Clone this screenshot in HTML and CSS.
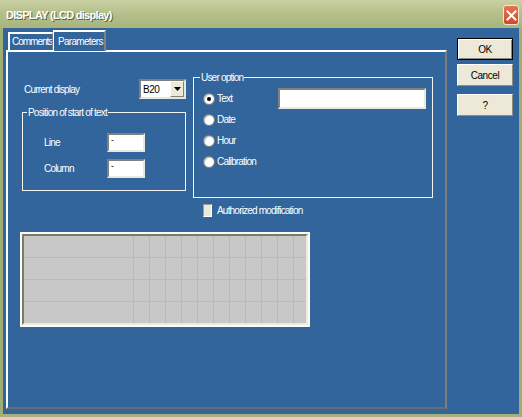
FILE: index.html
```html
<!DOCTYPE html>
<html>
<head>
<meta charset="utf-8">
<link rel="stylesheet" href="styles.css">
</head>
<body>
<div class="window">
  <div class="titlebar">
    <span class="title">DISPLAY (LCD display)</span>
    <span class="close"><svg width="11" height="11" viewBox="0 0 11 11"><path d="M1.5 1.5 L9.5 9.5 M9.5 1.5 L1.5 9.5" stroke="#fff" stroke-width="2" stroke-linecap="square"/></svg></span>
  </div>
  <div class="client">
    <div class="tabs-area">
      <div class="tabstrip">
        <div class="tab">Comments</div>
        <div class="tab active">Parameters</div>
      </div>
      <div class="panel">
        <div class="top-row">
          <div class="left-col">
            <div class="display-row">
              <span class="label">Current display</span>
              <div class="select"><span class="select-value">B20</span><span class="select-btn"><svg width="7" height="4" viewBox="0 0 7 4"><path d="M0 0 H7 L3.5 4 Z" fill="#000"/></svg></span></div>
            </div>
            <fieldset class="group pos-group">
              <legend>Position of start of text</legend>
              <div class="field-row"><span class="label field-label">Line</span><div class="input small"><span class="caret">-</span></div></div>
              <div class="field-row"><span class="label field-label">Column</span><div class="input small"><span class="caret">-</span></div></div>
            </fieldset>
          </div>
          <fieldset class="group user-group">
            <legend>User option</legend>
            <div class="radio-row"><span class="radio checked"></span><span class="label radio-label">Text</span><div class="input wide"></div></div>
            <div class="radio-row"><span class="radio"></span><span class="label radio-label">Date</span></div>
            <div class="radio-row"><span class="radio"></span><span class="label radio-label">Hour</span></div>
            <div class="radio-row"><span class="radio"></span><span class="label radio-label">Calibration</span></div>
          </fieldset>
        </div>
        <div class="check-row"><span class="checkbox"></span><span class="label">Authorized modification</span></div>
        <div class="lcd"><div class="lcd-screen"></div></div>
      </div>
    </div>
    <div class="buttons">
      <div class="btn default">OK</div>
      <div class="btn cancel">Cancel</div>
      <div class="btn help">?</div>
    </div>
  </div>
</div>
</body>
</html>
```
FILE: styles.css
```css
* { box-sizing: border-box; }
html, body { margin: 0; padding: 0; }
body { width: 522px; height: 417px; overflow: hidden; font-family: "Liberation Sans", Arial, sans-serif; font-size: 10px; }

.window { width: 522px; height: 417px; display: flex; flex-direction: column; }

.titlebar {
  height: 28px;
  display: flex;
  align-items: center;
  justify-content: space-between;
  padding: 0 3px 0 6px;
  background: linear-gradient(#c9d1a3, #b6c08b 45%, #a9b47d);
}
.title {
  color: #fff;
  font-weight: bold;
  font-size: 11px;
  letter-spacing: -0.7px;
  text-shadow: 1px 1px 0 #5c6636;
  margin-top: 2px;
}
.close {
  width: 16px;
  height: 20px;
  margin-top: 2px;
  border: 1px solid #f3e6dc;
  border-radius: 3px;
  background: linear-gradient(#e4754f, #d0492b);
  display: flex;
  align-items: center;
  justify-content: center;
}

.client {
  flex: 1;
  display: flex;
  background: #31659c;
  border-left: 3px solid #9eae75;
  border-right: 3px solid #9eae75;
  border-bottom: 3px solid #a2b27a;
}

.tabs-area { margin-left: 3px; padding-top: 2px; width: 441px; display: flex; flex-direction: column; }

.tabstrip { height: 20px; display: flex; align-items: flex-end; padding-left: 2px; }
.tab {
  color: #fff;
  height: 18px;
  padding: 2px 0 0 2px;
  border-top: 2px solid #fff;
  border-left: 2px solid #fff;
  border-right: 1px solid #808080;
  letter-spacing: -1px;
  width: 45px;
  white-space: nowrap;
  overflow: hidden;
}
.tab.active {
  height: 21px;
  width: 53px;
  margin-bottom: -1px;
  padding: 4px 0 0 4px;
  letter-spacing: -0.7px;
  position: relative;
  z-index: 1;
  background: #31659c;
  border-left: 1px solid #fff;
  border-right: 2px solid #808080;
}

.panel {
  height: 359px;
  border-style: solid;
  border-width: 2px;
  border-color: #fff #7c7c7c #6e6e6e #fff;
  padding: 19px 0 0 14px;
}

.label { color: #fff; letter-spacing: -0.8px; white-space: nowrap; }

.top-row { display: flex; gap: 7px; }

.left-col { width: 164px; display: flex; flex-direction: column; }
.display-row { display: flex; align-items: center; justify-content: space-between; padding: 8px 0 0 2px; height: 28px; }

.select {
  width: 47px; height: 20px;
  background: #fff;
  border-style: solid; border-width: 2px;
  border-color: #808080 #e8e6dc #e8e6dc #808080;
  display: flex; align-items: center; justify-content: space-between;
  padding-left: 2px;
}
.select-value { color: #000; letter-spacing: -0.5px; }
.select-btn {
  width: 14px; height: 16px;
  background: #ece9d8;
  border-style: solid; border-width: 1px;
  border-color: #fff #808080 #808080 #fff;
  display: flex; align-items: center; justify-content: center;
}

.group {
  margin: 0;
  padding: 0;
  border: 1px solid #f4f4f4;
  min-width: 0;
}
.group legend {
  color: #fff;
  padding: 0 1px;
  margin-left: 4px;
  line-height: 13px;
  letter-spacing: -0.8px;
}
.user-group legend { margin-left: 6px; }

.pos-group { margin-top: 7px; height: 85px; padding-top: 14px; }
.field-row { display: flex; align-items: center; height: 19px; margin: 0 0 7px 21px; }
.field-label { width: 63px; }

.input {
  background: #fff;
  border-style: solid; border-width: 2px;
  border-color: #808080 #eae8de #eae8de #808080;
}
.input.small { width: 38px; height: 19px; padding-left: 2px; }
.caret { color: #000; font-size: 9px; line-height: 10px; display: block; }
.input.wide { width: 148px; height: 21px; }

.user-group { width: 240px; height: 127px; padding-top: 4px; }
.radio-row { display: flex; align-items: center; height: 21px; margin-left: 9px; }
.radio {
  width: 12px; height: 12px;
  border-radius: 50%;
  background: #fff;
  border: 1px solid #7a7a7a;
  box-shadow: inset 1px 1px 0 #c8c8c8;
  margin-right: 2px;
  display: flex; align-items: center; justify-content: center;
}
.radio.checked::after { content: ""; width: 4px; height: 4px; border-radius: 50%; background: #000; }
.radio-label { width: 61px; }

.check-row { display: flex; align-items: center; gap: 5px; margin: 5px 0 0 181px; height: 14px; }
.checkbox {
  width: 9px; height: 13px;
  background: #ece9d8;
  border-style: solid; border-width: 1px;
  border-color: #9c9c9c #fff #fff #9c9c9c;
}

.lcd {
  margin: 15px 0 0 -2px;
  width: 290px; height: 95px;
  border: 2px solid #fafaf6;
}
.lcd-screen {
  height: 100%;
  border-style: solid; border-width: 2px;
  border-color: #7b7b6b #ecebe2 #ecebe2 #7b7b6b;
  background-color: #c8c8c8;
  background-image:
    repeating-linear-gradient(to right, transparent 0 15px, #bababa 15px 16px),
    repeating-linear-gradient(to bottom, transparent 0 21px, #bababa 21px 22px);
  background-size: 176px 100%, 100% 100%;
  background-position: 94px 0, 0 0;
  background-repeat: no-repeat, no-repeat;
}

.buttons { margin-left: 10px; padding-top: 10px; display: flex; flex-direction: column; width: 56px; }
.btn {
  height: 22px;
  background: #ece9d8;
  color: #000;
  display: flex; align-items: center; justify-content: center;
  border-style: solid; border-width: 1px;
  border-color: #fff #8d8b80 #8d8b80 #fff;
  letter-spacing: -0.4px;
}
.btn.default { border: 1px solid #000; box-shadow: inset 1px 1px 0 #fff, inset -1px -1px 0 #8d8b80; }
.btn.cancel { margin-top: 4px; }
.btn.help { margin-top: 8px; }
```
